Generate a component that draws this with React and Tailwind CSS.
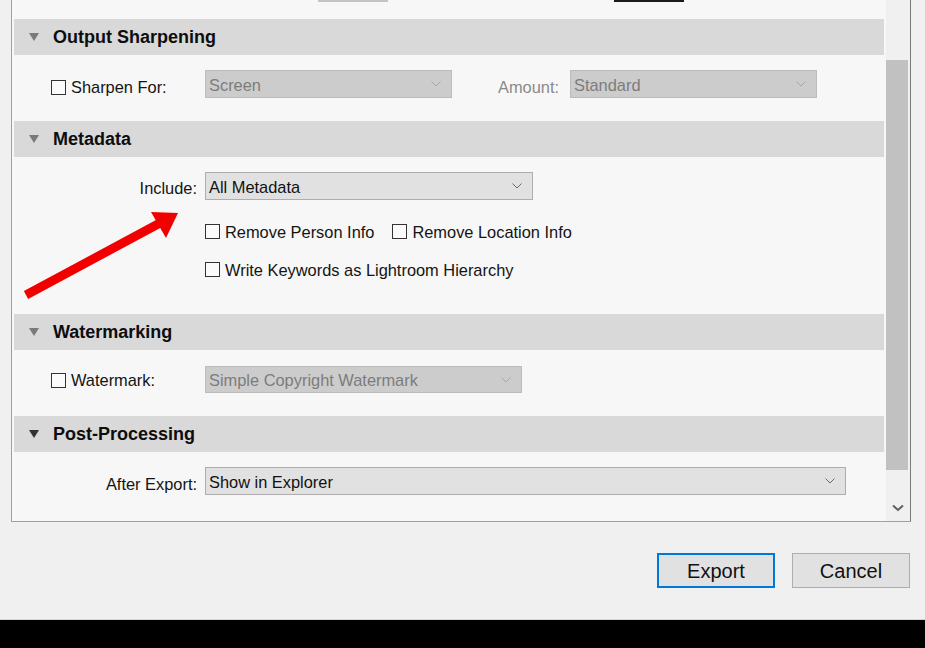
import React from 'react';

const font = { fontFamily: '"Liberation Sans", Arial, sans-serif' };

const Triangle = ({ dark }) => (
    <svg width="10" height="8" viewBox="0 0 10 8" className="shrink-0">
        <polygon points="0,0 10,0 5,8" fill={dark ? '#333333' : '#7a7a7a'} />
    </svg>
);

const Chevron = ({ color }) => (
    <svg width="10" height="6" viewBox="0 0 10 6" className="shrink-0">
        <polyline points="0.5,0.5 5,5 9.5,0.5" fill="none" stroke={color} strokeWidth="1" />
    </svg>
);

const Checkbox = () => (
    <div className="w-[15px] h-[15px] border border-[#333333] bg-[#fbfbfb] shrink-0" />
);

const Select = ({ value, width, disabled, height = 'h-[28px]' }) => (
    <div
        className={`${width} ${height} flex items-center justify-between pl-[3px] pr-[10px] border text-[16.4px] ${
            disabled ? 'bg-[#cccccc] border-[#bcbcbc] text-[#7c7c7c]' : 'bg-[#e1e1e1] border-[#adadad] text-[#111111]'
        }`}
    >
        <span className="pt-[2px]">{value}</span>
        <Chevron color={disabled ? '#a8a8a8' : '#6a6a6a'} />
    </div>
);

const Header = ({ title, dark }) => (
    <div className="mx-[2px] h-[36px] bg-[#d9d9d9] flex items-center pl-[15px] gap-[14px]">
        <Triangle dark={dark} />
        <span className="text-[18px] font-bold text-[#0d0d0d] pt-[1px]">{title}</span>
    </div>
);

const App = () => {
    return (
        <div className="relative w-[925px] h-[648px] bg-[#f0f0f0] overflow-hidden text-[#141414]" style={font}>
            {/* Scroll panel */}
            <div className="ml-[11px] w-[900px] h-[522px] flex border-l border-r border-b border-[#a0a0a0] border-r-[#7a7a7a]">
                <div className="flex-1 bg-[#f7f7f7] flex flex-col">
                    {/* cut-off controls */}
                    <div className="h-[19px] flex items-start">
                        <div className="ml-[306px] w-[70px] h-[2px] bg-[#c4c4c4]" />
                        <div className="ml-[226px] w-[70px] h-[2px] bg-[#1a1a1a]" />
                    </div>

                    <Header title="Output Sharpening" />
                    <div className="h-[66px] pt-[15px] flex items-start">
                        <div className="w-[193px] pl-[39px] flex items-center gap-[5px] h-[28px] pt-[7px] text-[16.4px]">
                            <Checkbox />
                            <span>Sharpen For:</span>
                        </div>
                        <Select value="Screen" width="w-[247px]" disabled />
                        <div className="ml-[46px] w-[72px] h-[28px] flex items-center pt-[6px] text-[16.4px] text-[#8a8a8a]">Amount:</div>
                        <Select value="Standard" width="w-[247px]" disabled />
                    </div>

                    <Header title="Metadata" />
                    <div className="h-[157px] pt-[15px] flex flex-col text-[16.4px]">
                        <div className="flex items-center">
                            <div className="w-[193px] pr-[8px] text-right pt-[4px]">Include:</div>
                            <Select value="All Metadata" width="w-[328px]" />
                        </div>
                        <div className="mt-[22px] ml-[193px] flex items-center h-[18px]">
                            <Checkbox />
                            <span className="ml-[5px] pt-[1px]">Remove Person Info</span>
                            <div className="ml-[18px]"><Checkbox /></div>
                            <span className="ml-[5px] pt-[1px]">Remove Location Info</span>
                        </div>
                        <div className="mt-[20px] ml-[193px] flex items-center h-[18px]">
                            <Checkbox />
                            <span className="ml-[5px] pt-[1px]">Write Keywords as Lightroom Hierarchy</span>
                        </div>
                    </div>

                    <Header title="Watermarking" />
                    <div className="h-[66px] pt-[16px] flex items-start">
                        <div className="w-[193px] pl-[39px] flex items-center gap-[5px] h-[27px] pt-[1px] text-[16.4px]">
                            <Checkbox />
                            <span>Watermark:</span>
                        </div>
                        <Select value="Simple Copyright Watermark" width="w-[317px]" height="h-[27px]" disabled />
                    </div>

                    <Header title="Post-Processing" dark />
                    <div className="flex-1 pt-[15px] flex items-start">
                        <div className="w-[193px] h-[28px] pr-[8px] flex items-center justify-end pt-[7px] text-[16.4px]">After Export:</div>
                        <Select value="Show in Explorer" width="w-[641px]" />
                    </div>
                </div>

                {/* Scrollbar */}
                <div className="w-[24px] bg-[#f0f0f0] flex flex-col">
                    <div className="h-[60px]" />
                    <div className="h-[410px] w-[22px] bg-[#c1c1c1]" />
                    <div className="flex-1 flex items-end justify-center pr-[1px] pb-[9px]">
                        <svg width="12" height="8" viewBox="0 0 12 8">
                            <polyline points="1,1.5 6,6 11,1.5" fill="none" stroke="#606060" strokeWidth="2" />
                        </svg>
                    </div>
                </div>
            </div>

            {/* Buttons */}
            <div className="h-[97px] flex justify-end items-start pt-[31px] pr-[15px] gap-[17px]">
                <button className="w-[118px] h-[35px] bg-[#e1e1e1] border-2 border-[#0078d7] text-[20px] text-[#111111] flex items-center justify-center">
                    Export
                </button>
                <button className="w-[118px] h-[35px] bg-[#e1e1e1] border border-[#adadad] text-[20px] text-[#111111] flex items-center justify-center">
                    Cancel
                </button>
            </div>

            <div className="h-[1px] bg-[#e6d6a8]" />
            <div className="h-[29px] bg-black" />

            {/* annotation arrow */}
            <svg className="absolute top-0 left-0 pointer-events-none" width="925" height="648" viewBox="0 0 925 648">
                <line x1="26" y1="295" x2="160" y2="223" stroke="#f20000" strokeWidth="9" />
                <polygon points="178,213 151,212 166,238" fill="#f20000" />
            </svg>
        </div>
    );
};

export default App;
